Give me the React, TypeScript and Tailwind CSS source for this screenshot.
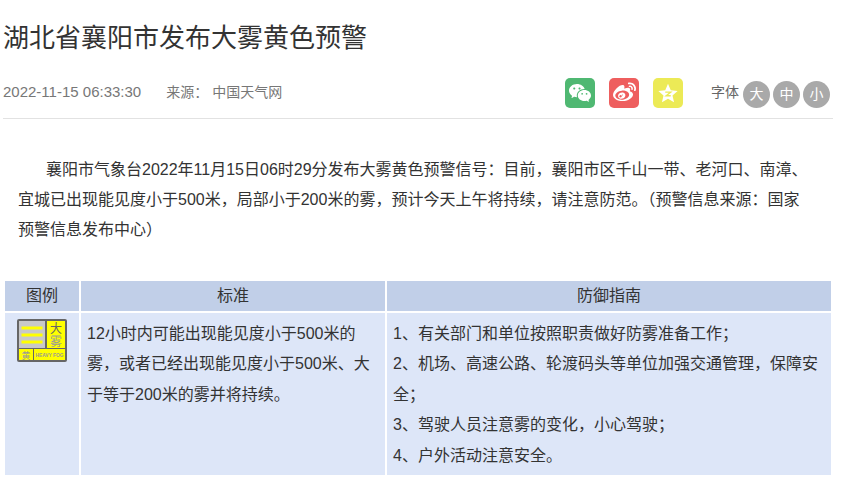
import { FaWeibo } from 'react-icons/fa'
import { RiWechatFill } from 'react-icons/ri'

const font = 'font-["Liberation_Sans","Noto_Sans_CJK_SC",sans-serif]'

function FogIcon() {
  return (
    <svg width="50" height="43" viewBox="0 0 50 43" className="block">
      <rect x="0" y="0" width="50" height="43" rx="2" fill="#666" />
      <rect x="2" y="2" width="26" height="27" fill="#c8c8c8" />
      <rect x="4.500" y="7.500" width="21" height="3" fill="#ffff00" />
      <rect x="4.500" y="14.500" width="21" height="3" fill="#ffff00" />
      <rect x="4.500" y="21.500" width="21" height="3" fill="#ffff00" />
      <rect x="30" y="2" width="18" height="27" fill="#ffff00" />
      <text x="39" y="14" textAnchor="middle" fontSize="12" fill="#666">大</text>
      <text x="39" y="27" textAnchor="middle" fontSize="12" fill="#999">雾</text>
      <rect x="2" y="30" width="14" height="11" fill="#ffff00" />
      <text x="9" y="39.500" textAnchor="middle" fontSize="9" fill="#999">黄</text>
      <rect x="17" y="30" width="31" height="11" fill="#ffff00" />
      <text x="18.500" y="38" fontSize="6" fontWeight="bold" fill="#999" textLength="28" lengthAdjust="spacingAndGlyphs">HEAVY FOG</text>
    </svg>
  )
}

function ShareBtn({ color, children }: { color: string; children: React.ReactNode }) {
  return <div className={`w-[30px] h-[30px] rounded-[5px] flex items-center justify-center text-white ${color}`}>{children}</div>
}

function SizeBtn({ label }: { label: string }) {
  return (
    <div className="w-[27px] h-[27px] rounded-full bg-[#a9a9a9] text-white text-[14px] flex items-center justify-center">
      {label}
    </div>
  )
}

export default function App() {
  return (
    <div className={`min-h-screen bg-white overflow-hidden pl-[3px] ${font}`}>
      <div className="w-[830px]">
        <h1 className="text-[26px] leading-[40px] pt-[18px] text-[#333] font-normal">湖北省襄阳市发布大雾黄色预警</h1>

        <div className="h-[61px] pt-[9px] flex items-center border-b border-[#e2e2e2] text-[14px] text-[#777]">
          <span className="text-[15px]">2022-11-15 06:33:30</span>
          <span className="ml-[25px]">来源：</span>
          <span className="ml-[4px]">中国天气网</span>
          <div className="ml-auto flex items-center pr-[3px]">
            <div className="flex gap-[14px] mr-[28px]">
              <ShareBtn color="bg-[#4fb872]"><RiWechatFill size={24} /></ShareBtn>
              <ShareBtn color="bg-[#ee5e5e]"><FaWeibo size={23} /></ShareBtn>
              <ShareBtn color="bg-[#ecea56]">
                <svg width="22" height="22" viewBox="0 0 24 24">
                  <path d="M12 2l3 7 7.500.8-5.600 5 1.700 7.400L12 18.400l-6.600 3.800 1.700-7.400-5.600-5L9 9z" fill="#fff" />
                  <path d="M9 11h6l-5 4h5" fill="none" stroke="#ecea56" strokeWidth="1.500" />
                </svg>
              </ShareBtn>
            </div>
            <span className="text-[#666] mr-[4px]">字体</span>
            <div className="flex gap-[3px] mt-[3px]">
              <SizeBtn label="大" />
              <SizeBtn label="中" />
              <SizeBtn label="小" />
            </div>
          </div>
        </div>

        <p className="mt-[36px] pl-[15px] pr-[18px] text-[16px] leading-[30px] text-[#333] indent-[28px]">
          襄阳市气象台2022年11月15日06时29分发布大雾黄色预警信号：目前，襄阳市区千山一带、老河口、南漳、宜城已出现能见度小于500米，局部小于200米的雾，预计今天上午将持续，请注意防范。（预警信息来源：国家预警信息发布中心）
        </p>

        <table className="mt-[34px] w-[830px] table-fixed border-separate border-spacing-[2px] text-[16px] text-[#333]">
          <thead>
            <tr className="h-[30px] bg-[#c1cfe8] text-center">
              <th className="w-[74px] font-normal p-0">图例</th>
              <th className="w-[304px] font-normal p-0">标准</th>
              <th className="font-normal p-0">防御指南</th>
            </tr>
          </thead>
          <tbody>
            <tr className="bg-[#dde6f8] align-top leading-[30.4px]">
              <td className="pt-[6px] pl-[12px]">
                <FogIcon />
              </td>
              <td className="pt-[6px] px-[6px] pb-[4px]">
                12小时内可能出现能见度小于500米的雾，或者已经出现能见度小于500米、大于等于200米的雾并将持续。
              </td>
              <td className="pt-[6px] px-[6px] pb-[4px]">
                <p>1、有关部门和单位按照职责做好防雾准备工作；</p>
                <p>2、机场、高速公路、轮渡码头等单位加强交通管理，保障安全；</p>
                <p>3、驾驶人员注意雾的变化，小心驾驶；</p>
                <p>4、户外活动注意安全。</p>
              </td>
            </tr>
          </tbody>
        </table>
      </div>
    </div>
  )
}
